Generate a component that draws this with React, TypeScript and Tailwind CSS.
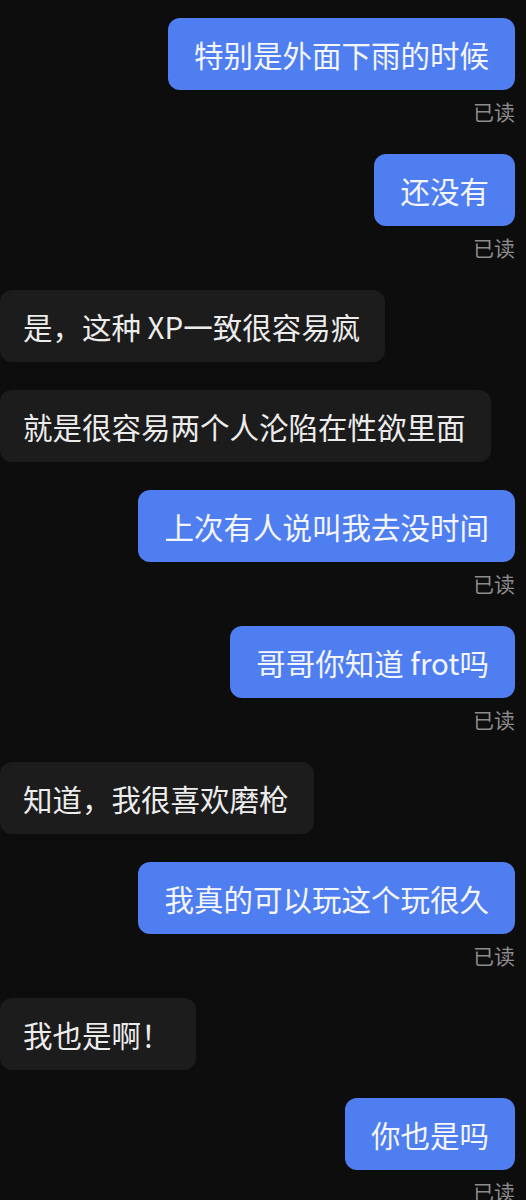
import React from "react";

type Msg = { me: boolean; text: string };

const msgs: Msg[] = [
  { me: true, text: "特别是外面下雨的时候" },
  { me: true, text: "还没有" },
  { me: false, text: "是，这种 XP一致很容易疯" },
  { me: false, text: "就是很容易两个人沦陷在性欲里面" },
  { me: true, text: "上次有人说叫我去没时间" },
  { me: true, text: "哥哥你知道 frot吗" },
  { me: false, text: "知道，我很喜欢磨枪" },
  { me: true, text: "我真的可以玩这个玩很久" },
  { me: false, text: "我也是啊！" },
  { me: true, text: "你也是吗" },
];

export default function App() {
  return (
    <div
      className="w-[526px] h-[1200px] overflow-hidden bg-[#0d0d0d] pt-[18px] flex flex-col gap-[28px]"
      style={{ fontFamily: '"Noto Sans CJK SC", "Noto Sans", sans-serif' }}
    >
      {msgs.map((m, i) =>
        m.me ? (
          <div key={i} className="flex flex-col items-end pr-[11px]">
            <div className="h-[72px] flex items-center rounded-[12px] bg-[#4f7ef0] px-[26px] text-[29.5px] leading-[40px] text-[#f4f6fb] whitespace-nowrap">
              {m.text}
            </div>
            <div className="mt-[9px] h-[27px] text-[21px] leading-[24px] text-[#8c8c8c]">
              已读
            </div>
          </div>
        ) : (
          <div key={i} className="flex">
            <div className="h-[72px] flex items-center rounded-[12px] bg-[#1c1c1c] pl-[23px] pr-[25px] text-[29.5px] leading-[40px] text-[#ececec] whitespace-nowrap">
              {m.text}
            </div>
          </div>
        )
      )}
    </div>
  );
}
